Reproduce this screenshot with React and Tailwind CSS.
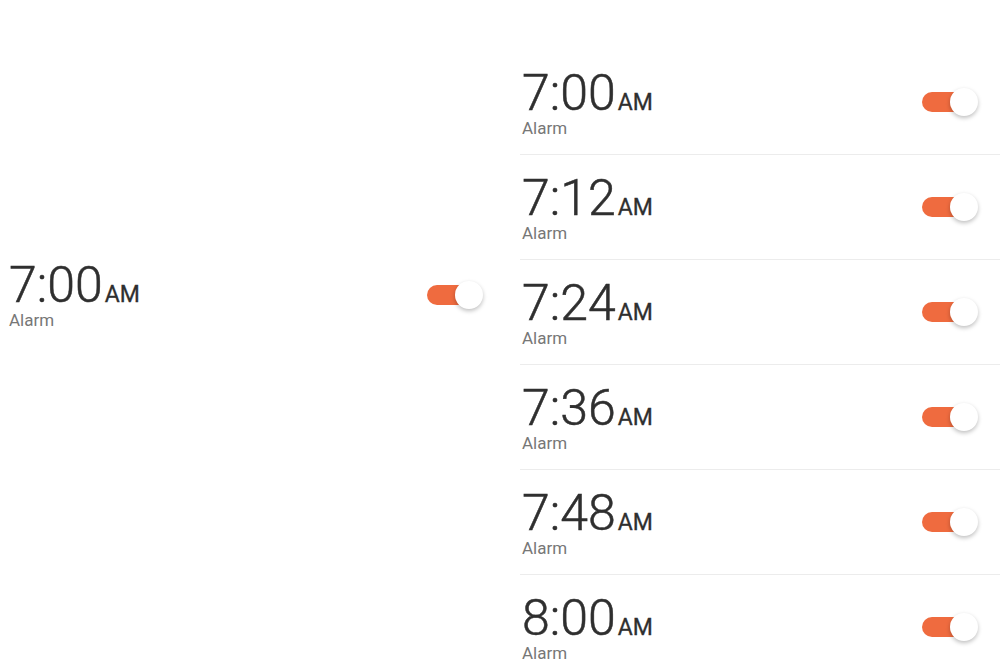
import React from 'react';

const alarms = ['7:00', '7:12', '7:24', '7:36', '7:48', '8:00'];

function Toggle() {
  return (
    <div className="flex items-center">
      <div className="h-[20px] w-[44px] rounded-full bg-[#ef6b3f]" />
      <div className="-ml-[16px] size-[28px] rounded-full bg-white shadow-[0_2px_4px_rgba(0,0,0,0.25)]" />
    </div>
  );
}

function AlarmText({ time }) {
  return (
    <div className="pl-[2px]">
      <div className="flex items-baseline leading-none text-[#2f2f2f]">
        <span className="text-[50px] font-light leading-[50px] [-webkit-text-stroke:0.5px_#2f2f2f]">{time}</span>
        <span className="ml-[2px] text-[23px] font-normal leading-none [-webkit-text-stroke:0.3px_#2f2f2f]">AM</span>
      </div>
      <div className="mt-[2px] text-[17px] leading-[17px] text-[#777777]">Alarm</div>
    </div>
  );
}

export default function App() {
  return (
    <div className="flex h-[665px] w-[1000px] overflow-hidden bg-white font-['Roboto',sans-serif]">
      <div className="w-[500px] shrink-0 pl-[7px] pr-[17px] pt-[260px]">
        <div className="flex items-center justify-between">
          <AlarmText time="7:00" />
          <Toggle />
        </div>
      </div>

      <div className="ml-[20px] flex-1 pt-[50px]">
        {alarms.map((t) => (
          <div
            key={t}
            className="flex h-[105px] shrink-0 items-center justify-between border-b border-[#ececec] pr-[22px]"
          >
            <AlarmText time={t} />
            <Toggle />
          </div>
        ))}
      </div>
    </div>
  );
}
